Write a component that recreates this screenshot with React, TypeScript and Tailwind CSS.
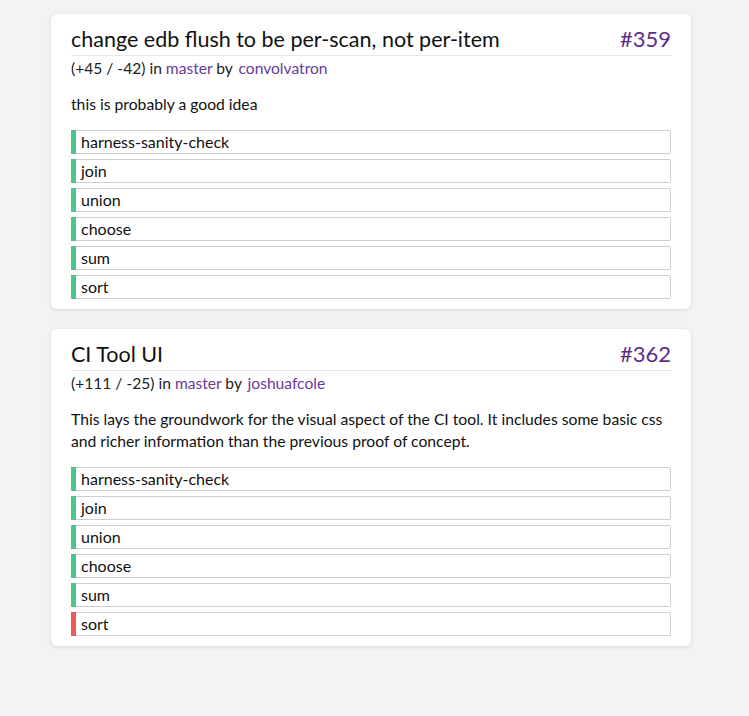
type Check = { name: string; ok: boolean };

type Change = {
  title: string;
  number: number;
  added: number;
  removed: number;
  branch: string;
  author: string;
  body: string;
  checks: Check[];
};

const names = ["harness-sanity-check", "join", "union", "choose", "sum", "sort"];

const changes: Change[] = [
  {
    title: "change edb flush to be per-scan, not per-item",
    number: 359,
    added: 45,
    removed: 42,
    branch: "master",
    author: "convolvatron",
    body: "this is probably a good idea",
    checks: names.map((name) => ({ name, ok: true })),
  },
  {
    title: "CI Tool UI",
    number: 362,
    added: 111,
    removed: 25,
    branch: "master",
    author: "joshuafcole",
    body: "This lays the groundwork for the visual aspect of the CI tool. It includes some basic css and richer information than the previous proof of concept.",
    checks: names.map((name) => ({ name, ok: name !== "sort" })),
  },
];

function ChangeCard({ change }: { change: Change }) {
  return (
    <div className="bg-white rounded-md shadow-[0_1px_4px_rgba(0,0,0,0.12)] px-5 pt-[11px] pb-[10px]">
      <div className="flex items-baseline justify-between border-b border-[#e6e6e6] pb-[2px]">
        <span className="text-[21.5px] leading-[28px] text-[#111]">{change.title}</span>
        <span className="text-[22px] leading-[28px] text-[#5e2a8c]">#{change.number}</span>
      </div>
      <div className="text-[15.6px] leading-[24px] text-[#222]">
        (+{change.added} / -{change.removed}) in{" "}
        <span className="text-[#6a3a9b]">{change.branch}</span> by{" "}
        <span className="text-[#6a3a9b] ml-[2px]">{change.author}</span>
      </div>
      <p className="text-[15.7px] leading-[22px] text-[#111] mt-[13px] mb-[15px]">{change.body}</p>
      <div className="flex flex-col gap-[5px]">
        {change.checks.map((c) => (
          <div
            key={c.name}
            className="flex h-6 border border-l-0 border-[#cfcfcf] rounded-r-[2px]"
          >
            <div className={c.ok ? "w-[5px] bg-[#48c98b] -my-px" : "w-[5px] bg-[#e85c5c] -my-px"} />
            <span className="pl-[5px] text-[16px] leading-[22px] text-[#111]">{c.name}</span>
          </div>
        ))}
      </div>
    </div>
  );
}

export default function App() {
  return (
    <div
      className="min-h-[716px] bg-[#f3f3f3] pt-[14px] pb-10"
      style={{ fontFamily: "Lato, 'Open Sans', sans-serif" }}
    >
      <div className="w-[640px] ml-[51px] flex flex-col gap-5">
        {changes.map((c) => (
          <ChangeCard key={c.number} change={c} />
        ))}
      </div>
    </div>
  );
}
